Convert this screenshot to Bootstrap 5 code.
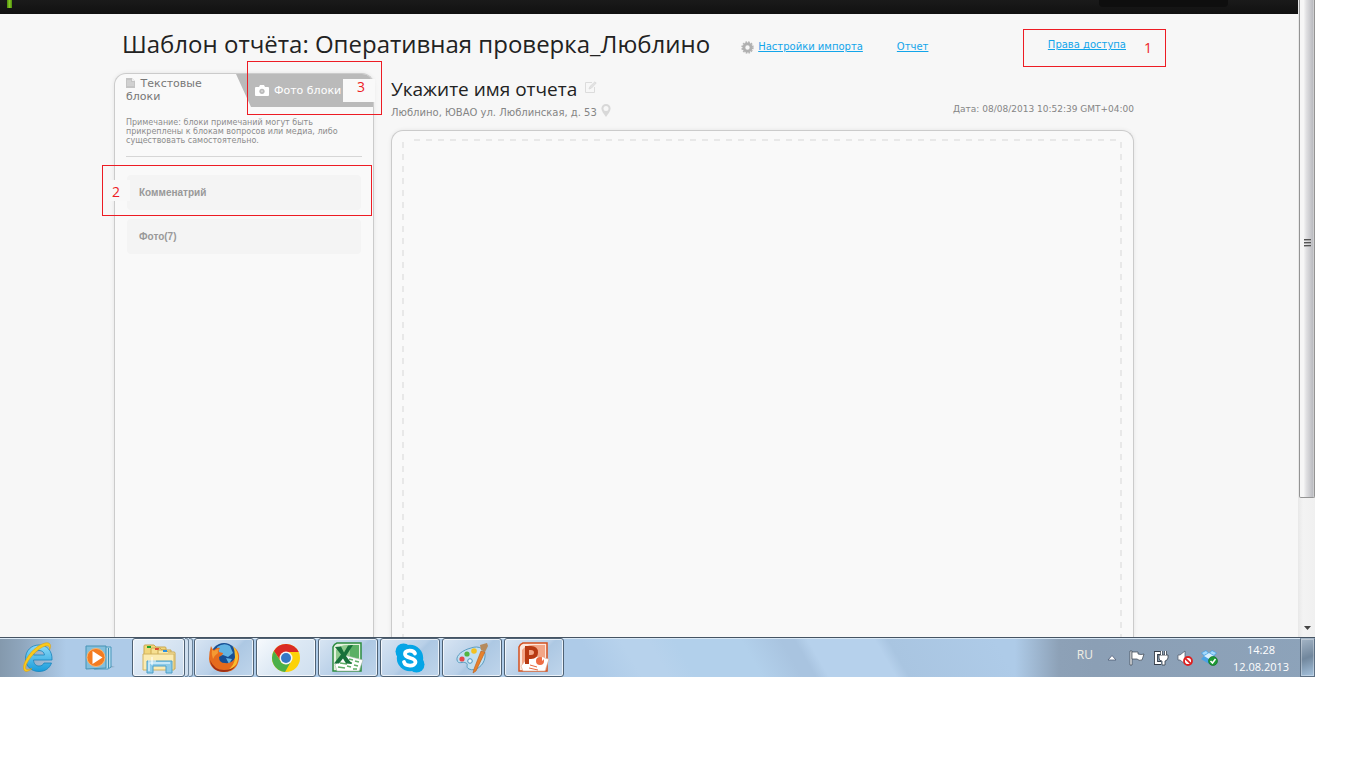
<!DOCTYPE html>
<html lang="ru">
  <head>
    <meta charset="UTF-8" />
    <meta name="viewport" content="width=device-width, initial-scale=1.0" />
    <title>Шаблон отчёта</title>
    <link
      href="https://cdn.jsdelivr.net/npm/bootstrap@5.3.3/dist/css/bootstrap.min.css"
      rel="stylesheet"
    />
    <style>
      body {
        background: #fff;
        color: #222;
        font-family: "DejaVu Sans", sans-serif;
        font-size: 10px;
        line-height: 14px;
      }

      svg {
        display: block;
        flex-shrink: 0;
      }

      .screen {
        height: calc(100vh - 91px);
        margin-right: 51px;
      }

      .page-area {
        min-width: 0;
        background: #f7f7f7;
      }

      /* dark site header, scrolled almost out of view */
      .site-bar {
        height: 14px;
        padding: 0 70px 0 7px;
        background: linear-gradient(#1a1a1a, #111);
      }

      .logo-stem {
        width: 5px;
        height: 8px;
        background: linear-gradient(90deg, #4c8a0c, #86c926, #4c8a0c);
      }

      .user-box {
        width: 129px;
        height: 7px;
        border-radius: 0 0 4px 4px;
        background: #0e0e0e;
      }

      .page-body {
        min-height: 0;
        padding: 14px 164px 0 114px;
      }

      .page-head {
        padding: 0 8px;
        height: 45px;
      }

      .page-title {
        font: 24px/32px "Open Sans", sans-serif;
      }

      .head-links {
        margin-left: 31px;
        padding-top: 2px;
      }

      .head-links a {
        color: #12a5ea;
      }

      .access-link {
        padding-bottom: 8px;
      }

      .report-link {
        margin-left: 34px;
      }

      /* red review frames */
      .review-frame {
        position: absolute;
        border: 1px solid #ed1c24;
        pointer-events: none;
      }

      .review-number {
        position: absolute;
        color: #ed1c24;
        font: 14px/16px "Open Sans", sans-serif;
      }

      .frame-access {
        top: 1px;
        right: -32px;
        width: 143px;
        height: 38px;
      }

      .frame-access .review-number {
        top: 10px;
        right: 13px;
      }

      .frame-photo {
        top: -13px;
        right: -9px;
        width: 135px;
        height: 54px;
      }

      .frame-photo .review-number {
        top: 17px;
        right: 6px;
        width: 32px;
        height: 23px;
        padding-left: 14px;
        background: #f9f9f9;
      }

      .frame-comment {
        top: -10px;
        left: -25px;
        right: -11px;
        height: 51px;
      }

      .frame-comment .review-number {
        top: 14px;
        left: 1px;
        width: 26px;
        height: 21px;
        padding: 4px 0 0 8px;
        background: #f8f8f8;
      }

      .side-panel {
        width: 260px;
        flex-shrink: 0;
        border: 1px solid #cbcbcb;
        border-bottom: 0;
        border-radius: 12px 12px 0 0;
        background: #f9f9f9;
        box-shadow: 0 0 4px rgba(0, 0, 0, 0.08);
      }

      .tab-row {
        height: 33px;
      }

      .tab-btn {
        border: 0;
        background: none;
        font-size: 11px;
        line-height: 13px;
        text-align: left;
      }

      .tab-text {
        width: 121px;
        padding: 0 0 2px 11px;
        color: #777;
      }

      .tab-text svg {
        display: inline-block;
        margin-right: 2px;
        vertical-align: -1px;
      }

      .tab-photo {
        padding: 0 0 0 19px;
        color: #fff;
        background: #bababa;
        border-radius: 0 11px 0 0;
        clip-path: polygon(0 0, 100% 0, 100% 100%, 15px 100%);
      }

      .tab-photo svg {
        margin-right: 5px;
      }

      .side-note {
        margin: 11px 11px 0;
        padding-bottom: 11px;
        border-bottom: 1px solid #d6d6d6;
        color: #8c8c8c;
        font-size: 8px;
        line-height: 9px;
      }

      .block-list {
        padding: 18px 12px 0;
        gap: 9px;
      }

      .block-item {
        width: 100%;
        padding: 11px 12px 10px;
        border: 0;
        border-radius: 4px;
        background: #f4f4f4;
        color: #999;
        font: bold 10px/14px "Liberation Sans", sans-serif;
        text-align: left;
      }

      .report {
        min-width: 0;
        margin-left: 17px;
      }

      .report-name {
        font: 19px/24px "Open Sans", sans-serif;
      }

      .report-meta {
        color: #858585;
      }

      .report-address {
        margin-top: 3px;
      }

      .report-date {
        font-size: 9px;
        padding-bottom: 5px;
      }

      .report-sheet {
        margin-top: 9px;
        padding: 8px 11px 0 10px;
        border: 1px solid #cbcbcb;
        border-bottom: 0;
        border-radius: 12px 12px 0 0;
        background: #f9f9f9;
        box-shadow: 0 0 4px rgba(0, 0, 0, 0.08);
      }

      /* dashed drop zone, drawn with gradients to get 6px dashes */
      .drop-zone {
        background:
          repeating-linear-gradient(90deg, #e8e8e8 0 6px, transparent 6px 12px) 12px 0 / calc(100% - 14px) 2px no-repeat,
          repeating-linear-gradient(#e8e8e8 0 6px, transparent 6px 12px) 0 3px / 2px 100% no-repeat,
          repeating-linear-gradient(#e8e8e8 0 6px, transparent 6px 12px) 100% 3px / 2px 100% no-repeat;
      }

      .scroll-track {
        width: 17px;
        padding-left: 1px;
        background: linear-gradient(90deg, #e8e8e8, #f3f3f3 30%, #f0f0f0);
      }

      .scroll-thumb {
        height: 498px;
        padding-bottom: 12px;
        border: 1px solid #949494;
        border-top: 0;
        border-radius: 0 0 2px 2px;
        background: linear-gradient(90deg, #f6f6f6 0 25%, #e0e0e2 45%, #bcbdc2 90%, #d6d6d6);
      }

      /* taskbar */
      .task-bar {
        height: 40px;
        flex-shrink: 0;
        border-top: 1px solid #465463;
        box-shadow: inset 0 1px #d9e8f5;
        background:
          linear-gradient(90deg, #8499ad 0, #8fa6bd 22px, transparent 66px),
          linear-gradient(90deg, transparent calc(100% - 300px), #8da1b7 calc(100% - 256px), #8b9fb5 calc(100% - 220px), #8da3ba 100%),
          linear-gradient(60deg, #aecbe8 0 45%, #b7d2ec 48% 50%, #b2d0eb 52% 57%, #a9c4e0 60% 61%, #b6d1ec 62% 67%, #a9c5e1 68%, #aecbe8 76%);
      }

      .task-group {
        gap: 2px;
        margin-left: 1px;
      }

      .task-btn {
        width: 60px;
        padding: 0;
        border: 1px solid #4f6275;
        border-radius: 3px;
        box-shadow: inset 0 0 0 1px rgba(255, 255, 255, 0.7);
        background: linear-gradient(135deg, #d8e5f3, #b9d0e8 50%, #adc8e3 55%, #bfd5eb);
      }

      .task-btn.current {
        background: linear-gradient(135deg, #f7fafd, #dce8f4 50%, #cfdfef);
      }

      .task-folder {
        width: 53px;
        background: linear-gradient(135deg, #e6eff8, #c8daed);
      }

      .task-plain {
        padding: 0;
        border: 0;
        background: none;
      }

      .task-ie {
        margin: 0 30px 0 22px;
      }

      .task-stack {
        width: 4px;
        border: 1px solid #6d849b;
        border-left: 0;
        border-radius: 0 3px 3px 0;
        background: #cfdfef;
      }

      .tray {
        color: #fff;
        font: 11px/17px "Open Sans", sans-serif;
      }

      .tray-lang {
        margin-right: 14px;
        padding-bottom: 6px;
        color: #f0eee4;
        font-size: 12px;
      }

      .tray-icons {
        gap: 8px;
      }

      .tray-clock {
        width: 82px;
        padding-left: 4px;
      }

      .desk-btn {
        width: 15px;
        padding: 0;
        border: 1px solid #5c6f83;
        border-top-color: #a5b6c7;
        background: linear-gradient(160deg, #a4b5c6, #71879d 50%, #a5c2dd);
        box-shadow: inset 0 0 0 1px rgba(255, 255, 255, 0.3);
      }
    </style>
  </head>
  <body>
    <div class="screen d-flex flex-column overflow-hidden">
      <div class="d-flex flex-grow-1 overflow-hidden">
        <div class="page-area d-flex flex-column flex-grow-1 overflow-hidden">
          <div class="site-bar d-flex justify-content-between flex-shrink-0">
            <div class="logo-stem"></div>
            <div class="user-box"></div>
          </div>

          <main class="page-body d-flex flex-column flex-grow-1">
            <header class="page-head d-flex align-items-start position-relative flex-shrink-0">
              <h1 class="page-title text-nowrap mb-0">Шаблон отчёта: Оперативная проверка_Люблино</h1>
              <nav class="head-links d-flex flex-grow-1 align-items-center text-nowrap mt-1">
                <svg width="13" height="13" viewBox="0 0 13 13">
                  <circle cx="6.5" cy="6.5" r="5.4" fill="none" stroke="#b4b4b4" stroke-width="1.6" stroke-dasharray="1.7 1.13" />
                  <circle cx="6.5" cy="6.5" r="3.6" fill="none" stroke="#b0b0b0" stroke-width="2.8" />
                </svg>
                <a class="ms-1" href="#import">Настройки импорта</a>
                <a class="report-link" href="#report">Отчет</a>
                <a class="access-link ms-auto mt-1" href="#access">Права доступа</a>
              </nav>
              <div class="review-frame frame-access"><span class="review-number">1</span></div>
            </header>

            <div class="d-flex flex-grow-1">
              <aside class="side-panel">
                <div class="tab-row d-flex position-relative">
                  <button class="tab-btn tab-text" type="button">
                    <svg width="9" height="10" viewBox="0 0 9 10">
                      <path d="M0 0h6l3 3v7H0z" fill="#c4c4c4" />
                      <path d="M6 0v3h3z" fill="#eee" />
                      <path d="M1 3h4M1 5h7M1 7h7" stroke="#ddd" />
                    </svg>
                    Текстовые блоки
                  </button>
                  <button class="tab-btn tab-photo d-flex align-items-center flex-grow-1" type="button">
                    <svg width="14" height="12" viewBox="0 0 14 12">
                      <path d="M1 2h3l1-2h4l1 2h3q1 0 1 1v7q0 1-1 1H1q-1 0-1-1V3q0-1 1-1z" fill="#fff" />
                      <circle cx="7" cy="6.3" r="2.6" fill="#bababa" />
                      <circle cx="7" cy="6.3" r="1" fill="#d8d8d8" />
                    </svg>
                    Фото блоки
                  </button>
                  <div class="review-frame frame-photo"><span class="review-number">3</span></div>
                </div>
                <p class="side-note">
                  Примечание: блоки примечаний могут быть<br />прикреплены к блокам вопросов или медиа, либо<br />существовать самостоятельно.
                </p>
                <div class="block-list d-flex flex-column">
                  <div class="position-relative">
                    <button class="block-item d-block" type="button">Комменатрий</button>
                    <div class="review-frame frame-comment"><span class="review-number">2</span></div>
                  </div>
                  <button class="block-item" type="button">Фото(7)</button>
                </div>
              </aside>

              <section class="report d-flex flex-column flex-grow-1">
                <div class="d-flex justify-content-between align-items-end pt-1">
                  <div>
                    <div class="d-flex align-items-center">
                      <h2 class="report-name mb-0">Укажите имя отчета</h2>
                      <svg class="ms-2 mb-1" width="12" height="12" viewBox="0 0 12 12" fill="none" stroke="#dcdcdc">
                        <path d="M7 1.5H.5v10h9V6" />
                        <path d="M4 8l1-2.5L10 .8 11.2 2 6.5 7z" fill="#e3e3e3" />
                      </svg>
                    </div>
                    <div class="report-meta report-address d-flex align-items-center">
                      Люблино, ЮВАО ул. Люблинская, д. 53
                      <svg class="ms-1 mb-1" width="10" height="13" viewBox="0 0 10 13">
                        <path d="M5 0a4.6 4.6 0 0 1 4.6 4.6C9.6 7.5 7 10 5 13 3 10 .4 7.5.4 4.6A4.6 4.6 0 0 1 5 0z" fill="#d8d8d8" />
                        <circle cx="5" cy="4.5" r="2.5" fill="#f7f7f7" />
                      </svg>
                    </div>
                  </div>
                  <div class="report-meta report-date">Дата: 08/08/2013 10:52:39 GMT+04:00</div>
                </div>
                <div class="report-sheet d-flex flex-grow-1">
                  <div class="drop-zone flex-grow-1"></div>
                </div>
              </section>
            </div>
          </main>
        </div>

        <div class="scroll-track d-flex flex-column justify-content-between flex-shrink-0">
          <div class="scroll-thumb d-flex align-items-center justify-content-center">
            <svg width="7" height="9" viewBox="0 0 7 9">
              <path d="M0 1.5h7M0 4.5h7M0 7.5h7" stroke="#555" />
              <path d="M0 2.5h7M0 5.5h7M0 8.5h7" stroke="#aaa" />
            </svg>
          </div>
          <svg class="align-self-center mb-1" width="7" height="8" viewBox="0 0 7 8">
            <path d="M0 1h7L3.5 5z" fill="#444" />
          </svg>
        </div>
      </div>

      <footer class="task-bar d-flex">
        <button class="task-plain task-ie d-flex align-items-center" type="button" aria-label="Internet Explorer">
          <svg width="32" height="32" viewBox="0 0 32 32">
            <defs>
              <linearGradient id="ie" x2="0" y2="1">
                <stop stop-color="#8fdcf8" />
                <stop offset="1" stop-color="#189bdb" />
              </linearGradient>
            </defs>
            <path fill-rule="evenodd" d="M30 18H11.5c.3 4 2.5 6 5.5 6 2.5 0 4-1 5-3h7.5C27.5 26.5 23 29.5 17 29.5 9 29.5 3.5 24 3.5 16.5S9 3 17 3C25 3 30.5 9 30 18zM11.5 13h11c-.5-3-2.5-4.5-5.5-4.5s-5 1.5-5.5 4.5z" fill="url(#ie)" stroke="#1684bd" stroke-width=".8" />
            <path d="M4 29.5C-4 28 8 5 23 1c5-1.3 7 2 4.5 7 .5-4-1.500-5-5.500-3.500C12 8.500 1.500 24 4 27c1 1 3 .5 6-.5-2 2-4.500 3-6 3z" fill="#fbc91c" stroke="#d99a07" stroke-width=".5" />
          </svg>
        </button>
        <button class="task-plain d-flex align-items-center" type="button" aria-label="Media Player">
          <svg width="32" height="28" viewBox="0 0 32 28">
            <path d="M8 26l23-3-6-2z" fill="#8fabc4" />
            <path d="M10 3h17v20l-3 2H10z" fill="#b5dcee" stroke="#4697bb" />
            <path d="M24.5 4v20" stroke="#3e8fb5" />
            <path d="M2 2h20v22l-20 1z" fill="#83bfdc" stroke="#4793b5" />
            <circle cx="12" cy="13.5" r="9" fill="#f47b20" stroke="#fbb66f" />
            <path d="M8.5 7l10 6.5L8.5 20z" fill="#fff" />
          </svg>
        </button>
        <button class="task-btn task-folder d-flex align-items-center justify-content-center ms-3" type="button" aria-label="Explorer">
          <svg width="34" height="32" viewBox="0 0 34 32">
            <path d="M2 27V4q0-1 1-1h9l2 2h9q1 0 1 1v21z" fill="#f1d67c" stroke="#c9a751" />
            <path d="M5 4h4v2H5z" fill="#1fa32b" />
            <path d="M9 27V7q0-1 1-1h8l2 2h9v19z" fill="#f6df91" stroke="#c9a751" />
            <path d="M13 6h4v2h-4z" fill="#e04931" />
            <path d="M16 27V8h8l2 2h6q1 0 1 1v16z" fill="#fae9a9" stroke="#c9a751" />
            <path d="M21 8h4v2h-4z" fill="#2a91e0" />
            <path d="M1 12h31v16H1z" fill="#fbebb2" stroke="#d2b361" />
            <path d="M5 31V19h25v12h-6v-7H11v7z" fill="#8ccbe9" stroke="#4d9fc7" />
            <path d="M7 29v-8h21" fill="none" stroke="#d7f1fb" stroke-width="1.5" />
            <path d="M10 15v8M6 19h8" stroke="#fff" />
          </svg>
        </button>
        <div class="task-stack"></div>
        <div class="task-stack"></div>
        <div class="task-group d-flex">
          <button class="task-btn d-flex align-items-center justify-content-center" type="button" aria-label="Firefox">
            <svg width="32" height="32" viewBox="0 0 32 32">
              <circle cx="16" cy="14" r="13" fill="#174f94" />
              <path d="M9 5q7-5 13-1l3 7-5 4-5-2-4 1zM18 16l6 1-3 5z" fill="#62b3e2" />
              <path d="M3 4q1 3 3 4 3-3 6-2-2 2-1 4l4 1q0 2-4 4 0 6 6 6 7 1 10-5 2-5-1-11 6 5 5 12-2 13-15 13Q2 29 1 17 1 10 3 4z" fill="#e66b1c" />
              <path d="M25 4q6 6 5 13-2 10-11 12 8-6 8-14 0-6-2-11z" fill="#f8bd2d" />
              <path d="M2 18q4 10 14 10 8 0 12-5-4 7-12 7Q4 30 2 18z" fill="#9f2f15" />
              <path d="M4 7q1 2 2 2 2-2 5-2-2 2-1 4-3 2-5 6-2-5-1-10z" fill="#f49a32" />
            </svg>
          </button>
          <button class="task-btn current d-flex align-items-center justify-content-center" type="button" aria-label="Chrome">
            <svg width="30" height="30" viewBox="0 0 30 30">
              <circle cx="15" cy="15" r="14" fill="#fcd209" />
              <path d="M2.9 8A14 14 0 0 1 27.7 9H15a6 6 0 0 0-5.5 8.5z" fill="#da2b25" />
              <path d="M2.9 8A14 14 0 0 0 14 29l6-10.5a6 6 0 0 1-10.5-.5z" fill="#4bb04a" />
              <circle cx="15" cy="15" r="6.5" fill="#f4f6f8" />
              <circle cx="15" cy="15" r="5" fill="#3578c6" />
            </svg>
          </button>
          <button class="task-btn d-flex align-items-center justify-content-center" type="button" aria-label="Excel">
            <svg width="32" height="32" viewBox="0 0 32 32">
              <path d="M5 1h24v28H1V5q1-3 4-4z" fill="#e5f3df" stroke="#2d8c40" stroke-width="1.5" />
              <path d="M4 8q4-5 11-5h12v16L4 26z" fill="#8fca8d" />
              <path d="M18 3h9v13h-9z" fill="#5bb065" />
              <path d="M12 13l19 5-4 11H5l-2-6z" fill="#fff" stroke="#9fb7a4" stroke-width=".6" />
              <path d="M8 21l7 1M6 25l7 1M17 17l4 1M16 20l4 1M15 24l4 1M23 19l4 1M22 23l4 1M21 27l4 0" stroke="#5fae67" stroke-width="1.5" />
              <path d="M3 5l6-.5 3 6 4-7 5-.5-7 11 6 8-6-.5-3-5-4 5H2l7-9z" fill="#17713a" />
            </svg>
          </button>
          <button class="task-btn d-flex align-items-center justify-content-center" type="button" aria-label="Skype">
            <svg width="30" height="30" viewBox="0 0 30 30">
              <g fill="#05a5e6">
                <circle cx="15" cy="15" r="13.2" />
                <circle cx="8.5" cy="8.5" r="8" />
                <circle cx="21.5" cy="21.5" r="8" />
              </g>
              <path d="M20 10.5C18.5 6.5 10 6.5 10 11c0 5 10.5 3 10.5 8 0 4.5-10 5-11.5 0" fill="none" stroke="#fff" stroke-width="3.8" stroke-linecap="round" />
            </svg>
          </button>
          <button class="task-btn d-flex align-items-center justify-content-center" type="button" aria-label="Paint">
            <svg width="34" height="32" viewBox="0 0 34 32">
              <path d="M16 6C24 3 31 7 30 15c-1 9-10 15-16 12-4-2 0-5-3-6-3-2-8 2-9-3C1 13 8 8 16 6z" fill="#c1dff0" stroke="#5b9dc0" />
              <circle cx="7" cy="17" r="2.6" fill="#e5484b" />
              <circle cx="12" cy="12" r="2.6" fill="#52b43f" />
              <circle cx="19" cy="9" r="2.8" fill="#f2c11f" />
              <circle cx="15" cy="19" r="2.3" fill="#eaf5fb" stroke="#4b92ba" />
              <path d="M26 9l4 1-9 19-3 2 1-4z" fill="#e7812c" stroke="#b85c17" stroke-width=".6" />
              <path d="M25 3l7-2 1 3-3 6-4-2z" fill="#b58a5d" />
            </svg>
          </button>
          <button class="task-btn d-flex align-items-center justify-content-center" type="button" aria-label="PowerPoint">
            <svg width="32" height="32" viewBox="0 0 32 32">
              <path d="M5 1h24v28H1V5q1-3 4-4z" fill="#fce7dc" stroke="#d4501e" stroke-width="1.5" />
              <path d="M4 8q4-5 11-5h12v16L4 26z" fill="#f3a686" />
              <path d="M12 13l19 4-4 12H5l-2-5z" fill="#fff" stroke="#dfa78f" stroke-width=".6" />
              <circle cx="22" cy="19" r="4" fill="#ee6c43" />
              <path d="M24 15l3 1-3 3z" fill="#fff" />
              <path d="M12 23l7 2M11 26l9 2" stroke="#e5693f" />
              <path d="M9 22V6h4q5 0 5 4.5T13 15H9" fill="none" stroke="#b73a12" stroke-width="4" />
            </svg>
          </button>
        </div>

        <div class="tray d-flex align-items-center ms-auto">
          <span class="tray-lang">RU</span>
          <div class="tray-icons d-flex align-items-center">
            <svg width="10" height="8" viewBox="0 0 10 8">
              <path d="M1 6l4-4.5L9 6z" fill="#fff" stroke="#4c5b75" stroke-width=".8" />
            </svg>
            <svg class="ms-1" width="16" height="16" viewBox="0 0 16 16">
              <path d="M1 1h2v14H1z" fill="#fff" stroke="#39424e" stroke-width=".7" />
              <path d="M3 2h6v2q3 1 6 0l-2 6q-3 1-5-1H3z" fill="#fff" stroke="#39424e" stroke-width=".7" />
            </svg>
            <svg width="16" height="16" viewBox="0 0 16 16">
              <path d="M9 3H3v10h5" fill="none" stroke="#333c48" stroke-width="4" />
              <path d="M9 3H3v10h5" fill="none" stroke="#fff" stroke-width="2.2" />
              <path d="M8.5 1v4M12.5 1v4" stroke="#333c48" stroke-width="2.6" />
              <path d="M6 5h9v3q-1 3-3 3v4H9v-4Q6 11 6 8z" fill="#fff" stroke="#333c48" stroke-width=".8" />
              <path d="M8.5 1v4M12.5 1v4" stroke="#fff" stroke-width="1.2" />
            </svg>
            <svg width="16" height="16" viewBox="0 0 16 16">
              <path d="M1 5h2l5-4v13l-5-4H1z" fill="#fff" stroke="#4a5564" stroke-width=".7" />
              <circle cx="11" cy="11" r="4" fill="#fff" stroke="#de1f1f" stroke-width="1.8" />
              <path d="M8.3 8.3l5.4 5.4" stroke="#de1f1f" stroke-width="1.8" />
            </svg>
            <svg width="17" height="16" viewBox="0 0 17 16">
              <path d="M5 0l3 3 3-3 5 3-3 3 3 3-8 5-8-5 3-3-3-3z" fill="#4ba3e5" />
              <path d="M8 3l5 3-5 3-5-3z" fill="#d7efff" />
              <path d="M5 1l2 2-4 2-2-2zM11 1l4 2-2 2-4-2z" fill="#a5d8fa" />
              <circle cx="12" cy="11" r="4.5" fill="#1e9a35" stroke="#0e6a20" stroke-width=".6" />
              <path d="M9.5 11l2 2 3-4" fill="none" stroke="#fff" stroke-width="1.6" />
            </svg>
          </div>
          <div class="tray-clock text-center">
            <div>14:28</div>
            <div>12.08.2013</div>
          </div>
          <button class="desk-btn align-self-stretch" type="button" aria-label="Рабочий стол"></button>
        </div>
      </footer>
    </div>

    <script src="https://cdn.jsdelivr.net/npm/bootstrap@5.3.3/dist/js/bootstrap.bundle.min.js"></script>
  </body>
</html>
